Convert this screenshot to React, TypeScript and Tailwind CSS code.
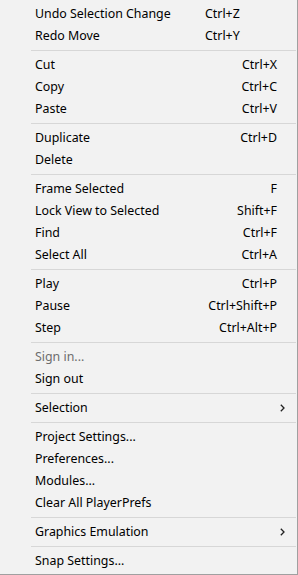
import React from "react";

type Item =
  | { sep: true }
  | {
      sep?: false;
      label: string;
      shortcut?: string;
      left?: boolean;
      disabled?: boolean;
      submenu?: boolean;
    };

const items: Item[] = [
  { label: "Undo Selection Change", shortcut: "Ctrl+Z", left: true },
  { label: "Redo Move", shortcut: "Ctrl+Y", left: true },
  { sep: true },
  { label: "Cut", shortcut: "Ctrl+X" },
  { label: "Copy", shortcut: "Ctrl+C" },
  { label: "Paste", shortcut: "Ctrl+V" },
  { sep: true },
  { label: "Duplicate", shortcut: "Ctrl+D" },
  { label: "Delete" },
  { sep: true },
  { label: "Frame Selected", shortcut: "F" },
  { label: "Lock View to Selected", shortcut: "Shift+F" },
  { label: "Find", shortcut: "Ctrl+F" },
  { label: "Select All", shortcut: "Ctrl+A" },
  { sep: true },
  { label: "Play", shortcut: "Ctrl+P" },
  { label: "Pause", shortcut: "Ctrl+Shift+P" },
  { label: "Step", shortcut: "Ctrl+Alt+P" },
  { sep: true },
  { label: "Sign in...", disabled: true },
  { label: "Sign out" },
  { sep: true },
  { label: "Selection", submenu: true },
  { sep: true },
  { label: "Project Settings..." },
  { label: "Preferences..." },
  { label: "Modules..." },
  { label: "Clear All PlayerPrefs" },
  { sep: true },
  { label: "Graphics Emulation", submenu: true },
  { sep: true },
  { label: "Snap Settings..." },
];

const Chevron = () => (
  <svg width="5" height="8" viewBox="0 0 5 8" className="block">
    <path d="M0.8 0.8 L4 4 L0.8 7.2" fill="none" stroke="#222" strokeWidth="1.3" />
  </svg>
);

export default function App() {
  return (
    <div className="w-[298px] h-[575px] bg-[#f2f2f2] border-r border-b border-[#a0a0a0] pt-[3px] pb-[2px] flex flex-col text-[12.4px] leading-none text-black font-['Noto_Sans','Liberation_Sans',sans-serif]">
      {items.map((it, i) =>
        it.sep ? (
          <div key={i} className="py-[3px] pl-[31px] pr-px">
            <div className="h-px bg-[#d7d7d7]" />
          </div>
        ) : (
          <div key={i} className="h-[22px] flex items-center pl-[35px]">
            <span className={`flex-1 whitespace-nowrap ${it.disabled ? "text-[#6d6d6d]" : ""}`}>
              {it.label}
            </span>
            {it.submenu ? (
              <span className="w-[72px] flex justify-end mr-[12px]">
                <Chevron />
              </span>
            ) : (
              <span
                className={`w-[72px] mr-[20px] whitespace-nowrap ${it.left ? "text-left" : "text-right"}`}
              >
                {it.shortcut}
              </span>
            )}
          </div>
        )
      )}
    </div>
  );
}
